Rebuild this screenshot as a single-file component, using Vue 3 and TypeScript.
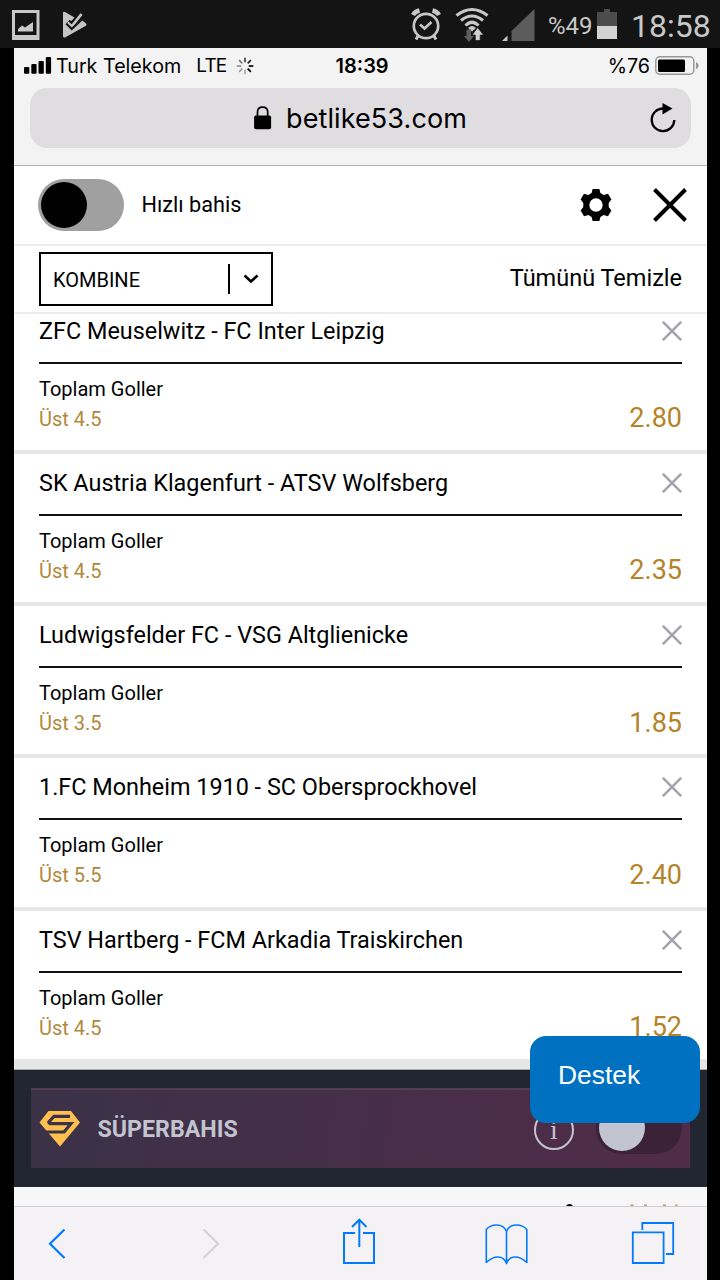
<script setup lang="ts">
interface Bet {
  match: string
  market: string
  pick: string
  odds: string
}

const bets: Bet[] = [
  { match: 'ZFC Meuselwitz - FC Inter Leipzig', market: 'Toplam Goller', pick: 'Üst 4.5', odds: '2.80' },
  { match: 'SK Austria Klagenfurt - ATSV Wolfsberg', market: 'Toplam Goller', pick: 'Üst 4.5', odds: '2.35' },
  { match: 'Ludwigsfelder FC - VSG Altglienicke', market: 'Toplam Goller', pick: 'Üst 3.5', odds: '1.85' },
  { match: '1.FC Monheim 1910 - SC Obersprockhovel', market: 'Toplam Goller', pick: 'Üst 5.5', odds: '2.40' },
  { match: 'TSV Hartberg - FCM Arkadia Traiskirchen', market: 'Toplam Goller', pick: 'Üst 4.5', odds: '1.52' },
]

const spinner = [0.75, 0.85, 1, 1, 0.3, 0.35, 0.4, 0.5].map((opacity, i) => ({ opacity, angle: i * 45 }))
</script>

<template>
  <div class="device">
    <div class="android">
      <svg class="a-pic" width="28" height="30" viewBox="0 0 28 30">
        <path fill="#c8c8c8" fill-rule="evenodd" d="M0 0H27.500V30H0ZM3 3V25H24.500V3Z" />
        <path fill="#c8c8c8" d="M6 21.500V19L10 15.500L13 17.500L21 12V21.500Z" />
      </svg>
      <svg class="a-play" width="26" height="28" viewBox="0 0 26 28">
        <path fill="#c4c4c4" d="M1 2Q1 0 3 1L12.500 6.500L9.500 10L7.500 9L4.500 12L10 18L19.500 9L23.500 12Q25.500 13.500 23.500 15L3 26.500Q1 27 1 25Z" />
        <path stroke="#c4c4c4" stroke-width="2.800" fill="none" d="M5.500 11.500L9.800 15.300L19.500 3" />
        <path stroke="#141414" stroke-width="2" fill="none" d="M4.200 12.500L9.700 18L20 8.500" />
      </svg>
      <span class="grow"></span>
      <svg class="a-alarm" width="30" height="33" viewBox="0 0 30 33">
        <g fill="none" stroke="#c8c8c8">
          <circle cx="15" cy="18" r="12.200" stroke-width="2.700" />
          <path stroke-width="2.600" d="M9 16.500L13.500 20.500L20.500 14" />
          <path stroke-width="4.500" d="M2 7Q4 3.500 8.500 2.500M28 7Q26 3.500 21.500 2.500" />
          <path stroke-width="3" d="M7 28L5 31.500M23 28L25 31.500" />
        </g>
      </svg>
      <svg class="a-wifi" width="34" height="35" viewBox="0 0 34 35">
        <g fill="none" stroke="#c8c8c8" stroke-width="3.100">
          <path d="M1.500 8.500Q17 -3.500 32.500 8.500M6 13.500Q17 4.500 28 13.500M10.500 18.500Q17 12 23.500 18.500" />
        </g>
        <path fill="#c8c8c8" d="M13 21Q17 17 21 21L17 24.500Z" />
        <path fill="#5e5e5e" d="M11.500 22.500H16V29H19L14 35L9 29H11.500Z" />
        <path fill="#d0d0d0" stroke="#141414" stroke-width=".7" d="M20.300 33.500H25.200V28H28.500L22.700 20.500L17 28H20.300Z" />
      </svg>
      <svg class="a-signal" width="34" height="33" viewBox="0 0 34 33">
        <path fill="#5c5c5c" d="M10.500 22L33.500 0V32H10.500Z" />
        <path fill="#c8c8c8" d="M1 32L6.500 26.500V32Z" />
      </svg>
      <span class="a-pct">%49</span>
      <svg class="a-bat" width="20" height="31" viewBox="0 0 20 31">
        <path fill="#4c4c4c" d="M0 3H7V0H13V3H20V18H0Z" />
        <path fill="#d2d2d2" d="M0 17H20V30H0Z" />
      </svg>
      <span class="a-time">18:58</span>
    </div>

    <div class="phone">
      <div class="browser">
        <div class="ios">
          <svg class="bars" width="28" height="17" viewBox="0 0 28 17">
            <rect x="0" y="10" width="5.300" height="6.700" rx="1" />
            <rect x="7.300" y="7" width="5.300" height="9.700" rx="1" />
            <rect x="14.500" y="4" width="5.300" height="12.700" rx="1" />
            <rect x="21.800" y="0" width="5.300" height="16.700" rx="1" />
          </svg>
          <span class="carrier">Turk Telekom</span>
          <span class="lte">LTE</span>
          <svg class="spin" width="18" height="18" viewBox="-9 -9 18 18">
            <line v-for="s in spinner" :key="s.angle" x1="0" y1="-3.800" x2="0" y2="-8.300" stroke="#000" stroke-width="1.700"
              :opacity="s.opacity" :transform="`rotate(${s.angle})`" />
          </svg>
          <span class="clock">18:39</span>
          <span class="grow"></span>
          <span class="pct">%76</span>
          <svg class="ibat" width="45" height="19" viewBox="0 0 45 19">
            <rect x=".8" y=".8" width="38" height="17.400" rx="4" fill="none" stroke="#999" stroke-width="1.500" />
            <rect x="3" y="3.500" width="27" height="12.500" rx="1.500" />
            <path fill="#999" d="M41 6Q43.700 7 43.700 9.500Q43.700 12 41 13Z" />
          </svg>
        </div>
        <div class="address">
          <svg class="lock" width="18" height="24" viewBox="0 0 18 24">
            <rect x=".1" y="9.500" width="17" height="13.700" rx="1.800" />
            <path fill="none" stroke="#000" stroke-width="1.700" d="M3.500 11V6Q3.500 1.200 8.600 1.200Q13.700 1.200 13.700 6V11" />
          </svg>
          <span class="url">betlike53.com</span>
          <svg class="reload" width="28" height="32" viewBox="0 0 28 32">
            <path fill="none" stroke="#000" stroke-width="2.300" d="M14 6.500A11.300 11.300 0 1 0 25.300 18" />
            <path d="M13.500 1L23.500 6.600L13.500 12.500Z" />
          </svg>
        </div>
      </div>

      <div class="quick">
        <span class="toggle"><i class="knob"></i></span>
        <span class="quick-label">Hızlı bahis</span>
        <span class="grow"></span>
        <svg class="gear" width="32" height="34" viewBox="-16 -17 32 34">
          <path fill-rule="evenodd" d="M-3.400 -16H3.400L4.400 -12L7.600 -10L12 -11.200L15.400 -5.400L12.700 -2V2L15.400 5.400L12 11.200L7.600 10L4.400 12L3.400 16H-3.400L-4.400 12L-7.600 10L-12 11.200L-15.400 5.400L-12.700 2V-2L-15.400 -5.400L-12 -11.200L-7.600 -10L-4.400 -12ZM0 -6.700A6.700 6.700 0 1 0 0 6.700A6.700 6.700 0 1 0 0 -6.700Z" />
        </svg>
        <svg class="close" width="34" height="34" viewBox="0 0 34 34">
          <path stroke="#000" stroke-width="3.900" d="M1.500 1.500L32.500 32.500M32.500 1.500L1.500 32.500" />
        </svg>
      </div>

      <div class="controls">
        <div class="select">
          <span class="select-label">KOMBINE</span>
          <span class="bar"></span>
          <svg width="16" height="12" viewBox="0 0 16 12">
            <path fill="none" stroke="#000" stroke-width="2.600" d="M1.500 2.500L8 8.500L14.500 2.500" />
          </svg>
        </div>
        <span class="clear">Tümünü Temizle</span>
      </div>

      <div class="list">
        <div v-for="bet in bets" :key="bet.match" class="bet">
          <div class="head">
            <span class="match">{{ bet.match }}</span>
            <svg width="20" height="20" viewBox="0 0 20 20">
              <path stroke="#a2a5af" stroke-width="2.500" d="M.8 .8L19.200 19.200M19.200 .8L.8 19.200" />
            </svg>
          </div>
          <div class="info">
            <div>
              <div class="market">{{ bet.market }}</div>
              <div class="pick">{{ bet.pick }}</div>
            </div>
            <div class="odds">{{ bet.odds }}</div>
          </div>
        </div>
      </div>
      <div class="gap"></div>

      <div class="promo-wrap">
        <div class="promo">
          <svg class="gem" width="42" height="38" viewBox="0 0 42 38">
            <path fill="#ffc050" d="M9.500 1H32L41 12.500L21 36.500L0.500 12.500Z" />
            <path fill="none" stroke="#3d3147" stroke-width="3.200" d="M31 6.300H15L9.800 12Q10 13.700 12.500 13.700H32L25 22H4" />
          </svg>
          <span class="promo-name">SÜPERBAHIS</span>
          <span class="grow"></span>
          <span class="inf">i</span>
          <span class="toggle dark"><i class="knob"></i></span>
        </div>
        <button class="support">Destek</button>
      </div>

      <div class="peek">
        <svg width="693" height="3" viewBox="0 0 693 3">
          <path d="M552 3Q553 1 555.500 1Q558 1 559 3Z" />
          <path fill="#c3a064" d="M616.500 1.500H619.500V3H616.500ZM630 1.500H633V3H630ZM649 1.500H652V3H649ZM661 1.500H663.500V3H661Z" />
        </svg>
      </div>

      <div class="toolbar">
        <svg width="693" height="73" viewBox="14 1207 693 73" fill="none" stroke="#007aff" stroke-width="2">
          <path stroke-width="2.200" d="M64.500 1229.500L50 1243.800L64.500 1258" />
          <path stroke="#d4d3d6" stroke-width="2.200" d="M203.500 1229.500L218 1243.800L203.500 1258" />
          <path d="M355 1233H344V1263H374V1233H363M359.300 1247V1220M352 1227L359.300 1219.700L366.500 1227" />
          <path stroke-width="1.600" stroke-linejoin="round" d="M506.500 1263V1231.500Q504 1225 496.500 1225Q490 1225 486.300 1229.500V1262.500Q492 1257 498 1257Q504 1257 506.500 1263.500Q509 1257 515 1257Q521 1257 526.800 1262.500V1229.500Q523 1225 516.500 1225Q509 1225 506.500 1231.500" />
          <path stroke-width="1.800" d="M632.800 1232.300H663.600V1263H632.800ZM642.300 1230V1223H673.200V1254H666" />
        </svg>
      </div>
    </div>
  </div>
</template>

<style>
body {
  margin: 0;
  background: #000;
}
</style>

<style scoped>
.device {
  width: 720px;
  height: 1280px;
  overflow: hidden;
  background: #000;
  color: #000;
  font-family: Roboto, "Liberation Sans", sans-serif;
}
.device * { box-sizing: border-box; }
.grow { flex: 1; }
span { white-space: nowrap; }
svg { display: block; flex: none; }
.android { height: 48px; display: flex; align-items: flex-start; background: #141414; padding: 0 10px 0 12px; color: #c8c8c8; }
.a-pic { margin-top: 10px; }
.a-play { margin: 11px 0 0 22px; }
.a-alarm { margin: 8px 14px 0 0; }
.a-wifi { margin: 7px 12px 0 0; }
.a-signal { margin: 9px 13px 0 0; }
.a-pct { width: 43px; font-size: 24px; line-height: 52px; margin-right: 6px; }
.a-bat { margin: 9px 14px 0 0; }
.a-time { font-size: 32px; line-height: 52px; width: 79px; }
.phone { margin: 0 13px 0 14px; background: #fff; height: 1232px; }
.browser { height: 118px; background: #f3f3f3; border-bottom: 1px solid #b2b2b2; }
.ios { height: 40px; display: flex; align-items: center; padding: 0 7px 5px 10px; position: relative; font-family: Inter, sans-serif; font-size: 19.700px; }
.bars { margin-bottom: 1px; }
.carrier { margin-left: 4px; }
.lte { margin-left: 15px; font-size: 19px; letter-spacing: -.8px; }
.spin { margin-left: 10px; }
.clock { position: absolute; left: 321.500px; font-size: 20px; font-weight: 600; }
.pct { margin-right: 5px; }
.address { margin: 0 16px; height: 60px; border-radius: 17px; background: #dfdde0; display: flex; align-items: center; position: relative; padding-left: 224px; }
.url { font-family: Inter, sans-serif; font-size: 27px; margin-left: 14px; letter-spacing: .1px; }
.reload { margin-left: auto; margin-right: 14px; }
.quick { height: 80px; border-bottom: 2px solid #ececec; display: flex; align-items: center; padding: 0 20px 1px 23.500px; }
.toggle { width: 86px; height: 52px; border-radius: 26px; background: #a0a0a0; padding: 3px; display: block; }
.knob { display: block; width: 46px; height: 46px; border-radius: 50%; background: #000; }
.quick-label { margin-left: 18px; font-size: 21.700px; }
.gear { margin-right: 41px; }
.controls { height: 68px; border-bottom: 2px solid #ececec; display: flex; justify-content: space-between; padding: 6px 25px; }
.select { width: 234px; height: 54px; border: 2px solid #000; display: flex; align-items: center; padding: 0 12px 0 12px; }
.select-label { font-size: 20px; flex: 1; padding-top: 1px; }
.bar { width: 2px; height: 30px; background: #000; margin-right: 13px; }
.clear { font-size: 23.500px; line-height: 52px; }
.list { height: 746px; overflow: hidden; }
.bet { height: 152.330px; border-bottom: 4px solid #e7e7e7; padding: 0 25px; }
.bet:first-child { margin-top: -12.500px; }
.head { height: 62px; border-bottom: 2px solid #111; display: flex; justify-content: space-between; align-items: center; padding-bottom: 2px; }
.match { font-size: 23.400px; }
.info { display: flex; justify-content: space-between; padding-top: 10px; }
.market { font-size: 20px; line-height: 30px; }
.pick { font-size: 20px; line-height: 30px; color: #b1883c; }
.odds { font-size: 27px; line-height: 30px; padding-top: 29.500px; color: #b58328; }
.gap { height: 10px; background: #e7e7e7; border-bottom: 1px solid #a9abaf; }
.promo-wrap { height: 117px; background: #222631; padding: 18px 17px 18px; position: relative; }
.promo { height: 80px; display: flex; align-items: center; background: linear-gradient(100deg, #3b3248, #4b2d48 70%, #502c49); border-top: 2px solid #523d58; padding: 0 8px 0 7.500px; }
.promo-name { margin-left: 17px; font-weight: 700; font-size: 23.200px; color: #c2c4cf; }
.inf { width: 40px; height: 40px; border: 2px solid #c2c4cf; border-radius: 50%; color: #c2c4cf; font: 28px/36px "Liberation Serif", serif; text-align: center; margin: 2px 22px 0 0; }
.toggle.dark { background: #3c2236; margin-top: -2px; }
.toggle.dark .knob { background: #c2c4cf; }
.support { position: absolute; left: 516px; top: -34px; width: 170px; height: 87px; border: 0; border-radius: 16px; background: #0070c0; color: #fff; font: 26.400px "Liberation Sans", sans-serif; text-align: left; padding: 0 0 8px 28px; }
.peek { height: 20px; background: #f7f7f7; border-bottom: 1px solid #cfcfd1; display: flex; align-items: flex-end; }
.toolbar { height: 73px; background: #f4f2f4; }
</style>
